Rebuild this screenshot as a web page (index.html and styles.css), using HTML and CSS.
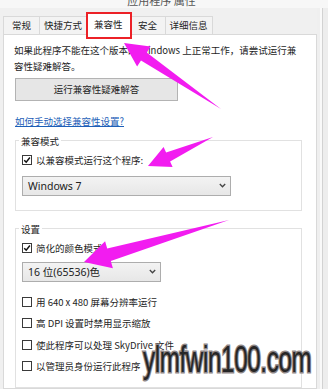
FILE: index.html
```html
<!DOCTYPE html>
<html lang="zh">
<head>
<meta charset="utf-8">
<link rel="stylesheet" href="styles.css">
</head>
<body>
<div class="window">
  <div class="title"><span>应用程序 属性</span></div>
  <div class="frame">
    <div class="dialog">
      <div class="tabs">
        <div class="tab t1">常规</div>
        <div class="tab t2">快捷方式</div>
        <div class="tab active">兼容性</div>
        <div class="tab t4">安全</div>
        <div class="tab t5">详细信息</div>
      </div>
      <div class="panel">
        <p class="intro">如果此程序不能在这个版本的 Windows 上正常工作，请尝试运行兼<br>容性疑难解答。</p>
        <button class="btn">运行兼容性疑难解答</button>
        <a class="link">如何手动选择兼容性设置?</a>
        <fieldset class="group">
          <legend>兼容模式</legend>
          <div class="check first"><span class="box"><svg viewBox="0 0 10 10" width="8" height="8"><path d="M1.5 5.2 L4 7.6 L8.6 1.8" fill="none" stroke="#111" stroke-width="1.8"/></svg></span>以兼容模式运行这个程序:</div>
          <div class="select os">Windows 7<svg class="chev" viewBox="0 0 7 5" width="7" height="5"><path d="M0.8 1 L3.5 3.8 L6.2 1" fill="none" stroke="#444" stroke-width="1.3"/></svg></div>
        </fieldset>
        <fieldset class="group g2">
          <legend>设置</legend>
          <div class="check first"><span class="box"><svg viewBox="0 0 10 10" width="8" height="8"><path d="M1.5 5.2 L4 7.6 L8.6 1.8" fill="none" stroke="#111" stroke-width="1.8"/></svg></span>简化的颜色模式</div>
          <div class="select color">16 位(65536)色<svg class="chev" viewBox="0 0 7 5" width="7" height="5"><path d="M0.8 1 L3.5 3.8 L6.2 1" fill="none" stroke="#444" stroke-width="1.3"/></svg></div>
          <div class="check opt o1"><span class="box"></span>用 640 x 480 屏幕分辨率运行</div>
          <div class="check opt"><span class="box"></span>高 DPI 设置时禁用显示缩放</div>
          <div class="check opt"><span class="box"></span>使此程序可以处理 SkyDrive 文件</div>
          <div class="check opt"><span class="box"></span>以管理员身份运行此程序</div>
        </fieldset>
      </div>
    </div>
    <div class="edge"></div>
  </div>
  <svg class="arrows" viewBox="0 0 328 389" width="328" height="389">
    <polygon points="221,109 146.7,52.4 150.6,46.6 124,43 137.1,66.4 141.0,60.6"/>
    <polygon points="213,137 166.1,152.5 163.6,147 148,166 172.6,167.1 170.1,161.6"/>
    <polygon points="229,220 107.2,248.5 105.1,241.3 84,262 112.9,268.2 110.8,261"/>
  </svg>
  <div class="watermark">ylmfwin100.com</div>
</div>
</body>
</html>
```
FILE: styles.css
```css
html, body {
  margin: 0;
  padding: 0;
  background: #f0f0f0;
}
.window {
  position: relative;
  width: 328px;
  height: 389px;
  overflow: hidden;
  background: #f0f0f0;
  font-family: "Noto Sans CJK SC", "Noto Sans", sans-serif;
  font-size: 9.5px;
  color: #1e1e1e;
}
.title {
  height: 8px;
  overflow: hidden;
  background: #f7f7f7;
  text-align: center;
  font-size: 11px;
  color: #555;
}
.title span {
  display: block;
  line-height: 11px;
  margin-top: -5px;
  padding-right: 5px;
}
.frame {
  display: flex;
  height: 381px;
}
.dialog {
  width: 314px;
  padding-left: 3px;
  display: flex;
  flex-direction: column;
}
.edge {
  flex: 1;
  background: linear-gradient(to right, #efefef 0 3px, #f9f9f9 3px 5px, #d2d2d2 5px 6px, #ededed 6px);
}
.tabs {
  height: 30px;
  display: flex;
  align-items: flex-end;
}
.tab {
  box-sizing: border-box;
  height: 18px;
  line-height: 17px;
  min-width: 37px;
  padding: 0 4px;
  text-align: center;
  border: 1px solid #d9d9d9;
  border-bottom: none;
  background: #f3f3f3;
  margin-right: -1px;
  white-space: nowrap;
}
.tab.t4 { min-width: 36px; }
.tab.active {
  position: relative;
  z-index: 2;
  height: 23px;
  margin-bottom: -1px;
  padding: 3px 7px 0;
  background: #fff;
}
.tab.active::after {
  content: "";
  position: absolute;
  left: -1px;
  right: -2px;
  top: -1px;
  bottom: -4px;
  border: 2.5px solid #ec2127;
}
.panel {
  flex: 1;
  background: #fff;
  border: 1px solid #d9d9d9;
  padding: 7px 14px 0 10px;
}
.intro {
  margin: 0;
  line-height: 16px;
  white-space: nowrap;
}
.btn {
  display: block;
  box-sizing: border-box;
  margin: 4px 0 0 1px;
  width: 163px;
  height: 23px;
  padding: 0;
  border: 1px solid #b3b3b3;
  background: #e6e6e6;
  font: inherit;
  color: #1e1e1e;
}
.link {
  display: block;
  margin-top: 14px;
  line-height: 12px;
  color: #1d5fb8;
  text-decoration: underline;
  width: max-content;
  margin-left: 1px;
}
.group {
  margin: 8px 0 0 1px;
  padding: 0 6px 14px;
  border: 1px solid #e1e1e1;
  min-inline-size: 0;
}
.group legend {
  padding: 0 2px;
  margin-left: -3px;
  line-height: 12px;
}
.group.g2 {
  margin-top: 12px;
}
.check {
  display: flex;
  align-items: center;
  height: 14px;
  white-space: nowrap;
}
.check.first { margin-top: 6px; }
.check.opt { margin-top: 7.5px; }
.check.opt.o1 { margin-top: 13px; }
.box {
  box-sizing: border-box;
  width: 10px;
  height: 10px;
  border: 1px solid #3a3a3a;
  background: #fff;
  margin-right: 4px;
  display: flex;
  align-items: center;
  justify-content: center;
  flex: none;
}
.select {
  box-sizing: border-box;
  height: 20px;
  border: 1px solid #adadad;
  background: linear-gradient(#f3f3f3, #e7e7e7);
  display: flex;
  align-items: center;
  justify-content: space-between;
  padding: 0 4px 0 5px;
  font-family: "Noto Sans", "Noto Sans CJK SC", sans-serif;
  font-size: 10.5px;
  color: #222;
}
.select.os { width: 209px; margin-top: 9px; }
.select.color { width: 139px; margin-top: 7px; }
.arrows {
  position: absolute;
  left: 0;
  top: 0;
  fill: #f21cf0;
  pointer-events: none;
}
.watermark {
  position: absolute;
  left: 143px;
  top: 342px;
  font-family: "Liberation Sans", Arial, sans-serif;
  font-size: 36px;
  line-height: 36px;
  color: #262626;
  -webkit-text-stroke: 3px #8e8686;
  paint-order: stroke fill;
  transform: scaleX(0.67);
  transform-origin: 0 0;
  white-space: nowrap;
  letter-spacing: -0.5px;
}
```
